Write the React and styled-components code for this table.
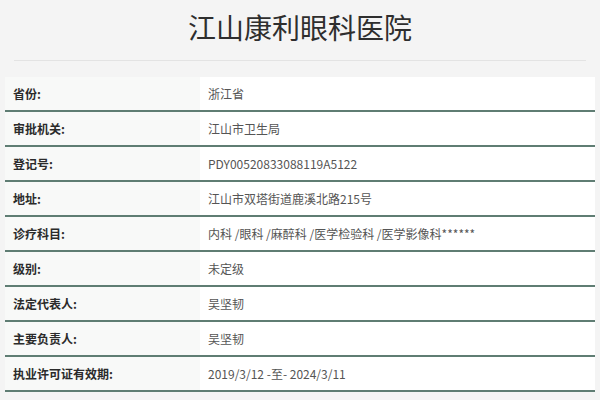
import React from "react";
import styled, { createGlobalStyle } from "styled-components";

const GlobalStyle = createGlobalStyle`
  html, body {
    margin: 0;
    padding: 0;
    background: #f4f4f4;
    font-family: "Noto Sans CJK SC", "Noto Sans", sans-serif;
  }
`;

const Page = styled.div`
  width: 600px;
  height: 400px;
  overflow: hidden;
  background: #f4f4f4;
`;

const Header = styled.div`
  margin: 0 14px;
  height: 60px;
  border-bottom: 1px solid #e3e3e3;
  display: flex;
  align-items: center;
  justify-content: center;
`;

const Title = styled.h1`
  margin: 0;
  font-size: 28px;
  font-weight: 400;
  color: #2e2e2e;
  letter-spacing: 0;
  padding-bottom: 6px;
`;

const Table = styled.div`
  margin: 16px 5px 0 5px;
  display: grid;
  grid-template-columns: 195px 1fr;
`;

const Cell = styled.div`
  height: 33px;
  display: flex;
  align-items: center;
  font-size: 12px;
  border-bottom: 2px solid #5f7d73;
  background: ${(p) => (p.$label ? "#f8f9f8" : "#ffffff")};
  color: ${(p) => (p.$label ? "#2b2b2b" : "#555555")};
  font-weight: ${(p) => (p.$label ? 700 : 400)};
  padding-left: ${(p) => (p.$label ? "8px" : "8px")};
`;

const rows = [
  ["省份:", "浙江省"],
  ["审批机关:", "江山市卫生局"],
  ["登记号:", "PDY00520833088119A5122"],
  ["地址:", "江山市双塔街道鹿溪北路215号"],
  ["诊疗科目:", "内科 /眼科 /麻醉科 /医学检验科 /医学影像科******"],
  ["级别:", "未定级"],
  ["法定代表人:", "吴坚韧"],
  ["主要负责人:", "吴坚韧"],
  ["执业许可证有效期:", "2019/3/12 -至- 2024/3/11"],
];

export default function App() {
  return (
    <Page>
      <GlobalStyle />
      <Header>
        <Title>江山康利眼科医院</Title>
      </Header>
      <Table>
        {rows.map(([label, value]) => (
          <React.Fragment key={label}>
            <Cell $label>{label}</Cell>
            <Cell>{value}</Cell>
          </React.Fragment>
        ))}
      </Table>
    </Page>
  );
}
